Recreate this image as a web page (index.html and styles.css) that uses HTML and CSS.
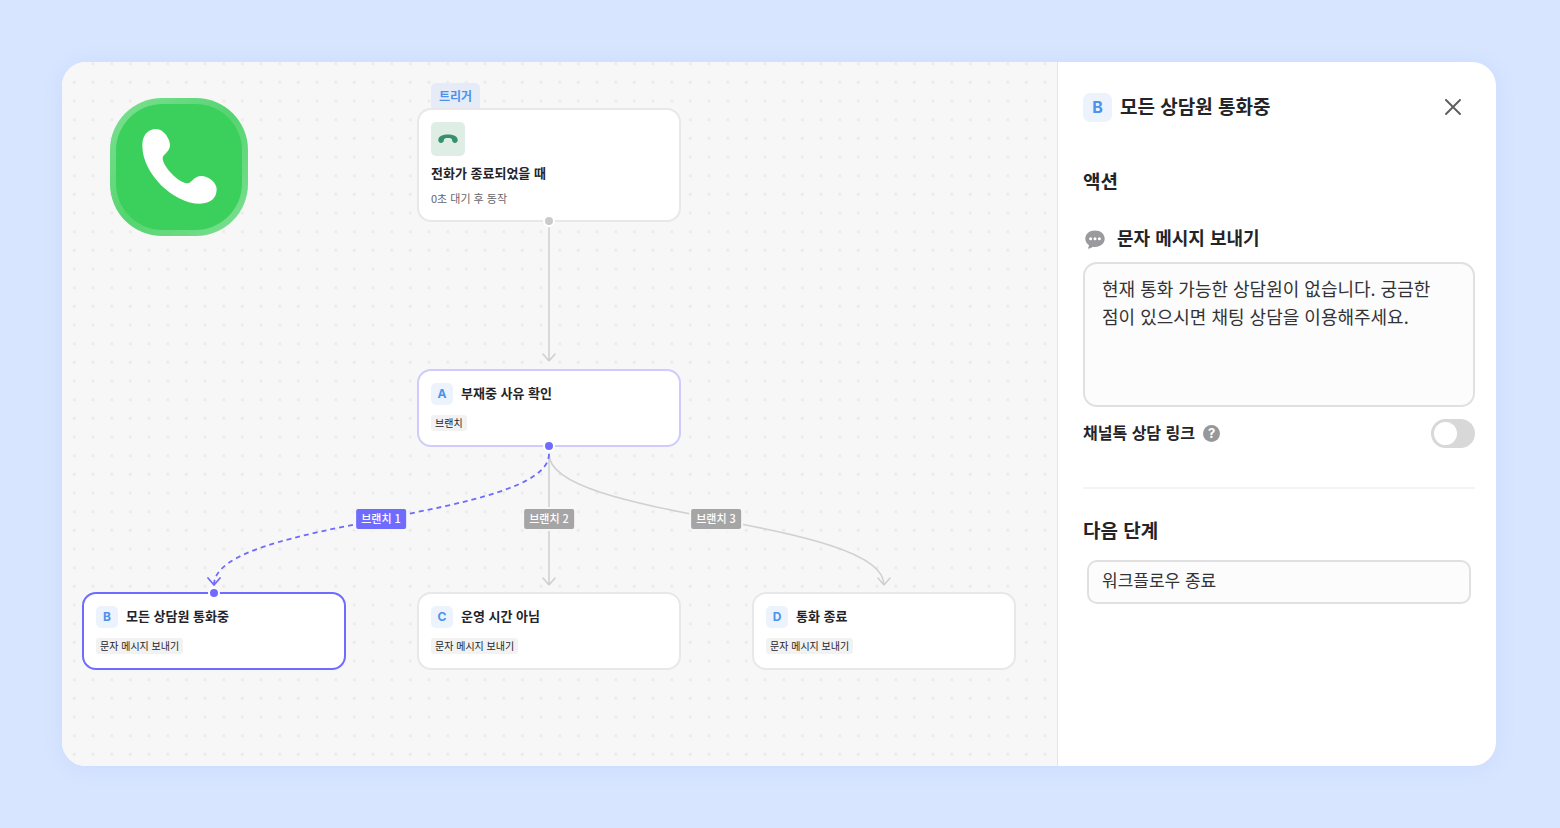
FILE: index.html
```html
<!DOCTYPE html>
<html lang="ko">
<head>
    <meta charset="UTF-8">
    <meta name="viewport" content="width=device-width, initial-scale=1.0">
    <title>워크플로우</title>
    <link rel="stylesheet" href="styles.css">
</head>
<body>
    <div class="window">
        <main class="canvas">
            <svg class="edges" aria-hidden="true">
                <defs>
                    <pattern id="dots" x="3" y="11" width="56" height="56" patternUnits="userSpaceOnUse">
                        <g fill="#ececec">
                            <circle cx="9.3" cy="9.3" r="1.7"/><circle cx="28" cy="9.3" r="1.7"/><circle cx="46.7" cy="9.3" r="1.7"/>
                            <circle cx="9.3" cy="28" r="1.7"/><circle cx="28" cy="28" r="1.7"/><circle cx="46.7" cy="28" r="1.7"/>
                            <circle cx="9.3" cy="46.7" r="1.7"/><circle cx="28" cy="46.7" r="1.7"/><circle cx="46.7" cy="46.7" r="1.7"/>
                        </g>
                    </pattern>
                </defs>
                <rect width="100%" height="100%" fill="url(#dots)"/>
                <g fill="none" stroke="#d0d0d0" stroke-width="1.6" stroke-linecap="round" stroke-linejoin="round">
                    <path d="M487 166V299M481 292l6 7 6-7"/>
                    <path d="M487 392V523M481 516l6 7 6-7"/>
                    <path d="M487 392C487 457 822 457 822 523M816 516l6 7 6-7"/>
                </g>
                <g fill="none" stroke="#6f6bff" stroke-width="1.8">
                    <path d="M487 392C487 457 152 457 152 523" stroke-dasharray="5 4"/>
                    <path d="M146 516l6 7 6-7" stroke-linecap="round" stroke-linejoin="round"/>
                </g>
            </svg>

            <svg class="call-logo" viewBox="0 0 414 414" aria-hidden="true">
                <defs>
                    <linearGradient id="rim" x1="0" y1="0" x2="1" y2="1">
                        <stop offset="0" stop-color="#7ee093"/>
                        <stop offset="0.5" stop-color="#55d470"/>
                        <stop offset="1" stop-color="#7ee093"/>
                    </linearGradient>
                </defs>
                <rect width="414" height="414" rx="156" fill="url(#rim)"/>
                <rect x="18" y="18" width="378" height="378" rx="140" fill="#3bd05c"/>
                <path fill="#fff" d="M139 93C112 93 97 113 97 143C97 226 190 317 270 317C302 317 320 300 320 274C320 254 297 234 273 234C252 234 244 256 233 256C206 256 158 205 158 180C158 170 180 162 180 141C180 122 160 93 139 93Z"/>
            </svg>

            <span class="trigger-tab">트리거</span>
            <section class="node node-trigger">
                <span class="node-icon">
                    <svg width="20" height="10" viewBox="0 0 20 10" aria-hidden="true">
                        <path fill="#37906a" d="M0.3 6C0.3 2.4 5 0.6 10 0.6S19.7 2.4 19.7 6C19.7 7.8 18.7 8.9 17.1 8.9C15.3 8.9 14.3 8 14.2 6.5C14.1 4.5 12.6 4 10 4S5.9 4.5 5.8 6.5C5.7 8 4.7 8.9 2.9 8.9C1.3 8.9 0.3 7.8 0.3 6Z"/>
                    </svg>
                </span>
                <h3>전화가 종료되었을 때</h3>
                <p>0초 대기 후 동작</p>
                <i class="port port-bottom"></i>
            </section>

            <section class="node node-a">
                <div class="node-title"><span class="letter">A</span><h3>부재중 사유 확인</h3></div>
                <span class="tag">브랜치</span>
                <i class="port port-bottom port-on"></i>
            </section>

            <span class="edge-label label-1">브랜치 1</span>
            <span class="edge-label label-2">브랜치 2</span>
            <span class="edge-label label-3">브랜치 3</span>

            <section class="node node-b">
                <div class="node-title"><span class="letter">B</span><h3>모든 상담원 통화중</h3></div>
                <span class="tag">문자 메시지 보내기</span>
                <i class="port port-top port-on"></i>
            </section>
            <section class="node node-c">
                <div class="node-title"><span class="letter">C</span><h3>운영 시간 아님</h3></div>
                <span class="tag">문자 메시지 보내기</span>
            </section>
            <section class="node node-d">
                <div class="node-title"><span class="letter">D</span><h3>통화 종료</h3></div>
                <span class="tag">문자 메시지 보내기</span>
            </section>
        </main>

        <aside class="panel">
            <header class="panel-header">
                <span class="letter letter-large">B</span>
                <h2>모든 상담원 통화중</h2>
                <button type="button" class="close" aria-label="닫기">
                    <svg width="16" height="16" viewBox="0 0 16 16" aria-hidden="true">
                        <path d="M1 1l14 14M15 1L1 15" stroke="#5e5e60" stroke-width="1.9" stroke-linecap="round"/>
                    </svg>
                </button>
            </header>

            <h2 class="action-heading">액션</h2>
            <label class="message-label" for="message">
                <svg width="20" height="19" viewBox="0 0 20 19" aria-hidden="true">
                    <path fill="#9a9a9c" d="M10 0.5C4.5 0.5 0.3 4 0.3 8.7C0.3 11.2 1.6 13.5 3.8 15C4 16.4 3.6 17.4 3 18C2.8 18.3 3 18.6 3.4 18.6C5.2 18.5 6.7 17.7 7.7 16.7C8.4 16.8 9.2 16.9 10 16.9C15.5 16.9 19.7 13.4 19.7 8.7S15.5 0.5 10 0.5Z"/>
                    <g fill="#fff"><circle cx="5.6" cy="8.7" r="1.5"/><circle cx="10" cy="8.7" r="1.5"/><circle cx="14.4" cy="8.7" r="1.5"/></g>
                </svg>
                <span>문자 메시지 보내기</span>
            </label>
            <textarea id="message" class="message">현재 통화 가능한 상담원이 없습니다. 궁금한 점이 있으시면 채팅 상담을 이용해주세요.</textarea>

            <div class="link-row">
                <label for="chat-link">채널톡 상담 링크</label>
                <span class="help">?</span>
                <input type="checkbox" id="chat-link" class="toggle">
            </div>

            <hr>
            <h2><label for="next-step">다음 단계</label></h2>
            <select id="next-step" class="next-step">
                <option>워크플로우 종료</option>
            </select>
        </aside>
    </div>
</body>
</html>
```
FILE: styles.css
```css
* {
    box-sizing: border-box;
}
body {
    margin: 0;
    padding: 62px 64px 62px 62px;
    min-height: 100vh;
    display: flex;
    background-color: #d7e5ff;
    color: #242428;
    font-family: "Noto Sans CJK KR", sans-serif;
    word-break: keep-all;
}
h2, h3, p {
    margin: 0;
}
.window {
    flex: 1;
    display: flex;
    border-radius: 24px;
    overflow: hidden;
    background-color: white;
    box-shadow: 0 2px 20px rgba(110, 150, 240, 0.12);
}

/* canvas */
.canvas {
    flex: 1;
    position: relative;
    overflow: hidden;
    background-color: #f7f7f7;
}
.edges {
    position: absolute;
    top: 0;
    left: 0;
    width: 100%;
    height: 100%;
}
.call-logo {
    position: absolute;
    top: 36px;
    left: 48px;
    width: 138px;
    height: 138px;
}
.node {
    position: absolute;
    width: 264px;
    min-height: 78px;
    padding: 12px;
    border: 2px solid #e8e8e8;
    border-radius: 14px;
    background-color: white;
}
.node h3 {
    font-size: 13px;
    line-height: 22px;
}
.node p {
    margin-top: 4px;
    font-size: 11px;
    line-height: 20px;
    color: #66666a;
}
.node-trigger {
    top: 46px;
    left: 355px;
    min-height: 113px;
}
.node-a {
    top: 307px;
    left: 355px;
    border-color: #cfccfc;
}
.node-b {
    top: 530px;
    left: 20px;
    border-color: #6f6bff;
}
.node-c {
    top: 530px;
    left: 355px;
}
.node-d {
    top: 530px;
    left: 690px;
}
.node-title {
    display: flex;
    align-items: center;
    gap: 8px;
}
.node-title h3 {
    line-height: 20px;
    padding-bottom: 2px;
}
.node-icon {
    width: 34px;
    height: 34px;
    margin-bottom: 6px;
    display: flex;
    align-items: center;
    justify-content: center;
    border-radius: 5px;
    background-color: #deeee4;
}
.trigger-tab {
    position: absolute;
    top: 21px;
    left: 369px;
    padding: 0 8px;
    height: 26px;
    border-radius: 5px 5px 0 0;
    background-color: #e5ecf8;
    color: #4d92ea;
    font-size: 12px;
    font-weight: bold;
    line-height: 26px;
}
.letter {
    width: 22px;
    height: 22px;
    border-radius: 5px;
    background-color: #ecf3fd;
    color: #4d92ea;
    font-family: Inter, sans-serif;
    font-size: 12px;
    font-weight: bold;
    line-height: 22px;
    text-align: center;
}
.tag {
    display: inline-block;
    margin-top: 10px;
    padding: 0 4px;
    border-radius: 3px;
    background-color: #f2f2f2;
    font-size: 10px;
    line-height: 16px;
    vertical-align: top;
}
.port {
    position: absolute;
    left: 50%;
    width: 12px;
    height: 12px;
    margin-left: -6px;
    border: 2px solid white;
    border-radius: 50%;
    background-color: #cacaca;
}
.port-top {
    top: -7px;
}
.port-bottom {
    bottom: -7px;
}
.port-on {
    background-color: #6f6bff;
}
.edge-label {
    position: absolute;
    top: 457px;
    padding: 0 5px 2px;
    border-radius: 2px;
    box-shadow: 0 0 0 2px #f7f7f7;
    background-color: #a5a5a6;
    color: white;
    font-size: 11px;
    font-weight: 500;
    line-height: 18px;
    transform: translate(-50%, -50%);
}
.label-1 {
    left: 319px;
    background-color: #6f6bff;
}
.label-2 {
    left: 487px;
}
.label-3 {
    left: 654px;
}

/* side panel */
.panel {
    width: 439px;
    padding: 23px 21px 24px 25px;
    border-left: 1px solid #e4e4e4;
}
.panel h2 {
    padding-bottom: 2px;
    font-size: 19px;
    line-height: 28px;
}
.panel-header {
    display: flex;
    align-items: center;
    gap: 8px;
}
.letter-large {
    width: 29px;
    height: 29px;
    border-radius: 7px;
    font-size: 16px;
    line-height: 28px;
}
.close {
    width: 44px;
    height: 44px;
    margin-left: auto;
    display: flex;
    align-items: center;
    justify-content: center;
    border: none;
    background: none;
    cursor: pointer;
}
.action-heading {
    margin-top: 38px;
}
.message-label {
    margin-top: 27px;
    padding-left: 2px;
    display: flex;
    align-items: center;
    gap: 12px;
    font-size: 18px;
    font-weight: bold;
    line-height: 26px;
}
.message-label span {
    padding-bottom: 4px;
}
.message {
    display: block;
    width: 100%;
    height: 145px;
    margin-top: 8px;
    padding: 10px 17px;
    border: 2px solid #e0e0e0;
    border-radius: 14px;
    background-color: #fcfcfc;
    color: #333336;
    font-family: inherit;
    font-size: 18px;
    line-height: 28px;
    word-break: keep-all;
    resize: none;
}
.link-row {
    margin-top: 12px;
    display: flex;
    align-items: center;
    gap: 8px;
    font-size: 16px;
    font-weight: bold;
    line-height: 24px;
}
.link-row label {
    padding-bottom: 4px;
}
.help {
    width: 17px;
    height: 17px;
    border-radius: 50%;
    background-color: #98989a;
    color: white;
    font-family: Inter, sans-serif;
    font-size: 13px;
    line-height: 17px;
    text-align: center;
}
.toggle {
    appearance: none;
    width: 44px;
    height: 29px;
    margin: 0 0 0 auto;
    padding: 3px;
    border-radius: 15px;
    background-color: #d8d8d8;
    cursor: pointer;
}
.toggle::before {
    content: "";
    display: block;
    width: 23px;
    height: 23px;
    border-radius: 50%;
    background-color: white;
}
.toggle:checked {
    background-color: #6f6bff;
}
.toggle:checked::before {
    margin-left: auto;
}
.panel hr {
    margin: 39px 0 27px;
    border: none;
    border-top: 2px solid #f4f4f4;
}
.next-step {
    appearance: none;
    display: block;
    width: calc(100% - 8px);
    height: 44px;
    margin: 14px 4px 0;
    padding: 0 13px 5px;
    border: 2px solid #e0e0e0;
    border-radius: 10px;
    background-color: #fcfcfc;
    color: #333336;
    font-family: inherit;
    font-size: 17px;
}
```
